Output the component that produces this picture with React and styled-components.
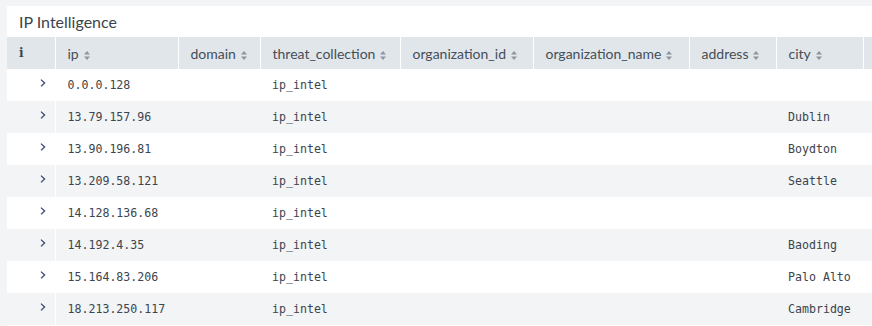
import React from 'react';
import styled, { createGlobalStyle } from 'styled-components';

const GlobalStyle = createGlobalStyle`
  * {
    margin: 0;
    padding: 0;
    box-sizing: border-box;
  }

  body {
    background: #f2f4f5;
    font-family: Lato, 'Open Sans', sans-serif;
    color: #3c444d;
    overflow: hidden;
  }
`;

const Page = styled.div`
  padding: 6px 0 0 7px;
  height: 326px;
`;

const Panel = styled.section`
  background: #fff;
  height: 100%;
  overflow: hidden;
`;

const Title = styled.h2`
  font-size: 16px;
  font-weight: 400;
  color: #3c444d;
  height: 31px;
  line-height: 31px;
  padding-left: 12px;
`;

const Table = styled.table`
  border-collapse: collapse;
  table-layout: fixed;
  width: 900px;
`;

const HeadCell = styled.th`
  background: #e1e6eb;
  height: 32px;
  padding: 0 0 0 12px;
  text-align: left;
  font-weight: 400;
  font-size: 14px;
  color: #454e58;
  border-right: 1px solid #fff;
  white-space: nowrap;
`;

const InfoCell = styled(HeadCell)`
  font-family: 'DejaVu Serif', serif;
  font-weight: 700;
  font-size: 12px;
  color: #3c444d;
`;

const Row = styled.tr`
  background: ${p => (p.$striped ? '#f2f4f5' : '#fff')};
`;

const Cell = styled.td`
  height: 32px;
  padding: 0 0 0 12px;
  font-family: 'DejaVu Sans Mono', 'Liberation Mono', monospace;
  font-size: 11.6px;
  color: #3c444d;
  white-space: nowrap;
`;

const ExpandCell = styled.td`
  height: 32px;
  padding: 10px 9px 0 0;
  border-right: 1px solid #fff;
  vertical-align: top;

  svg {
    display: block;
    margin-left: auto;
  }
`;

const SortIcon = styled.svg`
  margin-left: 5px;
  vertical-align: -1px;
`;

const Sort = () => (
  <SortIcon width="6" height="9" viewBox="0 0 6 9">
    <path d="M3 0 L6 3.5 H0 Z M3 9 L0 5.5 H6 Z" fill="#8b96a2" />
  </SortIcon>
);

const Chevron = () => (
  <svg width="6" height="8" viewBox="0 0 6 8">
    <path d="M1 0.6 L4.6 4 L1 7.4" fill="none" stroke="#35496a" strokeWidth="1.3" />
  </svg>
);

const columns = [
  { key: 'ip', w: 123 },
  { key: 'domain', w: 82 },
  { key: 'threat_collection', w: 140 },
  { key: 'organization_id', w: 133 },
  { key: 'organization_name', w: 156 },
  { key: 'address', w: 87 },
  { key: 'city', w: 87 },
];

const rows = [
  ['0.0.0.128', ''],
  ['13.79.157.96', 'Dublin'],
  ['13.90.196.81', 'Boydton'],
  ['13.209.58.121', 'Seattle'],
  ['14.128.136.68', ''],
  ['14.192.4.35', 'Baoding'],
  ['15.164.83.206', 'Palo Alto'],
  ['18.213.250.117', 'Cambridge'],
];

export default function App() {
  return (
    <>
      <GlobalStyle />
      <Page>
        <Panel>
          <Title>IP Intelligence</Title>
          <Table>
            <colgroup>
              <col style={{ width: 48 }} />
              {columns.map(c => (
                <col key={c.key} style={{ width: c.w }} />
              ))}
              <col />
            </colgroup>
            <thead>
              <tr>
                <InfoCell>i</InfoCell>
                {columns.map(c => (
                  <HeadCell key={c.key}>
                    {c.key}
                    <Sort />
                  </HeadCell>
                ))}
                <HeadCell />
              </tr>
            </thead>
            <tbody>
              {rows.map(([ip, city], i) => (
                <Row key={ip} $striped={i % 2 === 1}>
                  <ExpandCell>
                    <Chevron />
                  </ExpandCell>
                  <Cell>{ip}</Cell>
                  <Cell />
                  <Cell>ip_intel</Cell>
                  <Cell />
                  <Cell />
                  <Cell />
                  <Cell>{city}</Cell>
                  <Cell />
                </Row>
              ))}
            </tbody>
          </Table>
        </Panel>
      </Page>
    </>
  );
}
